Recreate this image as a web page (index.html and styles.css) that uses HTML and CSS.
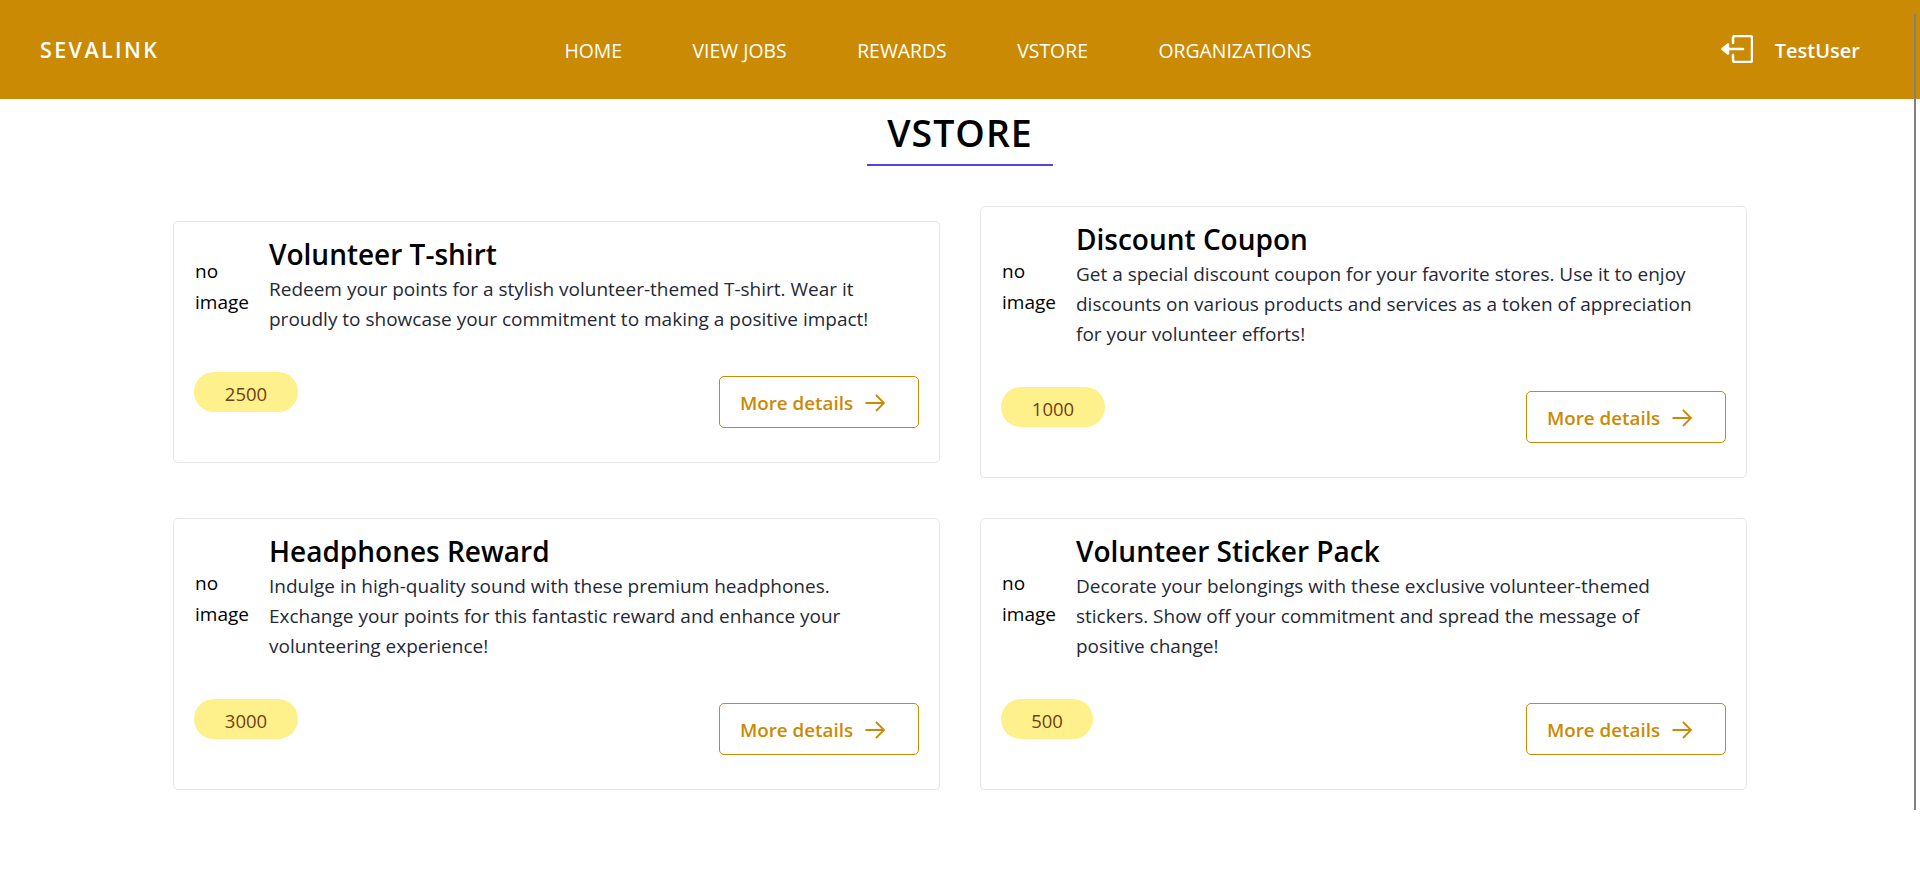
FILE: index.html
```html
<!DOCTYPE html>
<html lang="en">
<head>
<meta charset="utf-8">
<title>SevaLink VStore</title>
<link rel="stylesheet" href="styles.css">
</head>
<body>
<header class="navbar">
  <a class="brand">SEVALINK</a>
  <nav class="nav-links">
    <a>HOME</a><a>VIEW JOBS</a><a>REWARDS</a><a>VSTORE</a><a>ORGANIZATIONS</a>
  </nav>
  <div class="user">
    <svg class="logout" width="32" height="28" viewBox="0 0 32 28" fill="none" stroke="#fff" stroke-width="2.5" stroke-linejoin="round" stroke-linecap="round"><path d="M12 8V3a2 2 0 0 1 2-2h15a2 2 0 0 1 2 2v22a2 2 0 0 1-2 2H14a2 2 0 0 1-2-2v-5"/><path d="M5 14h17"/><path d="M7 9.5 1.5 14 7 18.500Z" fill="#fff"/></svg>
    <span class="username">TestUser</span>
  </div>
</header>
<main>
  <h1 class="title">VSTORE</h1>
  <div class="underline"></div>
  <section class="grid">
    <article class="card">
      <div class="top">
        <div class="noimg">no image</div>
        <div class="info">
          <h2>Volunteer T-shirt</h2>
          <p>Redeem your points for a stylish volunteer-themed T-shirt. Wear it<br>proudly to showcase your commitment to making a positive impact!</p>
        </div>
      </div>
      <div class="bottom">
        <span class="pill">2500</span>
        <a class="btn">More details
          <svg width="20" height="20" viewBox="0 0 20 20" fill="none" stroke="#ca8a04" stroke-width="1.800"><path d="M0.500 10H19M11 2l8 8-8 8"/></svg>
        </a>
      </div>
    </article>
    <article class="card">
      <div class="top">
        <div class="noimg">no image</div>
        <div class="info">
          <h2>Discount Coupon</h2>
          <p>Get a special discount coupon for your favorite stores. Use it to enjoy<br>discounts on various products and services as a token of appreciation<br>for your volunteer efforts!</p>
        </div>
      </div>
      <div class="bottom">
        <span class="pill">1000</span>
        <a class="btn">More details
          <svg width="20" height="20" viewBox="0 0 20 20" fill="none" stroke="#ca8a04" stroke-width="1.800"><path d="M0.500 10H19M11 2l8 8-8 8"/></svg>
        </a>
      </div>
    </article>
    <article class="card">
      <div class="top">
        <div class="noimg">no image</div>
        <div class="info">
          <h2>Headphones Reward</h2>
          <p>Indulge in high-quality sound with these premium headphones.<br>Exchange your points for this fantastic reward and enhance your<br>volunteering experience!</p>
        </div>
      </div>
      <div class="bottom">
        <span class="pill">3000</span>
        <a class="btn">More details
          <svg width="20" height="20" viewBox="0 0 20 20" fill="none" stroke="#ca8a04" stroke-width="1.800"><path d="M0.500 10H19M11 2l8 8-8 8"/></svg>
        </a>
      </div>
    </article>
    <article class="card">
      <div class="top">
        <div class="noimg">no image</div>
        <div class="info">
          <h2>Volunteer Sticker Pack</h2>
          <p>Decorate your belongings with these exclusive volunteer-themed<br>stickers. Show off your commitment and spread the message of<br>positive change!</p>
        </div>
      </div>
      <div class="bottom">
        <span class="pill pill-small">500</span>
        <a class="btn">More details
          <svg width="20" height="20" viewBox="0 0 20 20" fill="none" stroke="#ca8a04" stroke-width="1.800"><path d="M0.500 10H19M11 2l8 8-8 8"/></svg>
        </a>
      </div>
    </article>
  </section>
</main>
<div class="thumb"></div>
</body>
</html>
```
FILE: styles.css
```css
* { box-sizing: border-box; }
html, body { margin: 0; height: 875px; overflow: hidden; background: #fff; }
body { font-family: "Open Sans", "Noto Sans", sans-serif; color: #1f2937; }
a { color: inherit; text-decoration: none; }

.navbar {
  height: 99px;
  background: #ca8a04;
  color: #fff;
  display: grid;
  grid-template-columns: 1fr auto 1fr;
  align-items: center;
  padding: 2px 60px 0 40px;
}
.brand { font-size: 21.500px; font-weight: 600; letter-spacing: 2.400px; margin-top: -2px; }
.nav-links { display: flex; gap: 70.500px; font-size: 19.400px; margin-left: -24px; }
.user { display: flex; align-items: center; justify-content: flex-end; gap: 22px; }
.logout { margin-top: -3px; }
.username { font-size: 20px; font-weight: 600; margin-top: -1px; }

.title {
  margin: 11px 0 0;
  text-align: center;
  font-size: 37.500px;
  line-height: 46px;
  font-weight: 600;
  letter-spacing: 1px;
  color: #000;
}
.underline { width: 186px; height: 2px; margin: 8px auto 0; background: #4f46e5; }

.grid {
  width: 1574px;
  margin: 40px auto 0;
  display: grid;
  grid-template-columns: 767px 767px;
  column-gap: 40px;
  row-gap: 40px;
  align-items: center;
}
.card {
  background: #fff;
  border: 1px solid #e5e7eb;
  border-radius: 5px;
  padding: 14px 20px 34px;
}
.top { display: flex; align-items: center; gap: 20px; }
.noimg { width: 54px; margin: 4px 0 0 1px; flex: none; font-size: 19px; line-height: 31px; color: #000; }
.info { flex: 1; }
.info h2 { margin: 0; font-size: 28px; line-height: 36px; font-weight: 600; color: #000; }
.info p { margin: 2px 0 0; font-size: 19px; line-height: 30px; white-space: nowrap; }
.bottom { display: flex; justify-content: space-between; align-items: flex-start; margin-top: 38px; }
.pill {
  width: 104px;
  height: 40px;
  padding-top: 2px;
  border-radius: 20px;
  background: #fef08a;
  color: #713f12;
  font-size: 18.500px;
  display: flex;
  align-items: center;
  justify-content: center;
}
.pill-small { width: 92px; }
.btn {
  width: 200px;
  height: 52px;
  margin-top: 4px;
  padding: 2px 0 0 20px;
  border: 1px solid #ca8a04;
  border-radius: 5px;
  color: #ca8a04;
  font-size: 18.800px;
  font-weight: 600;
  display: flex;
  align-items: center;
  gap: 12px;
}
.thumb { position: absolute; left: 1914px; top: 14px; width: 2px; height: 796px; background: #808080; }
```
